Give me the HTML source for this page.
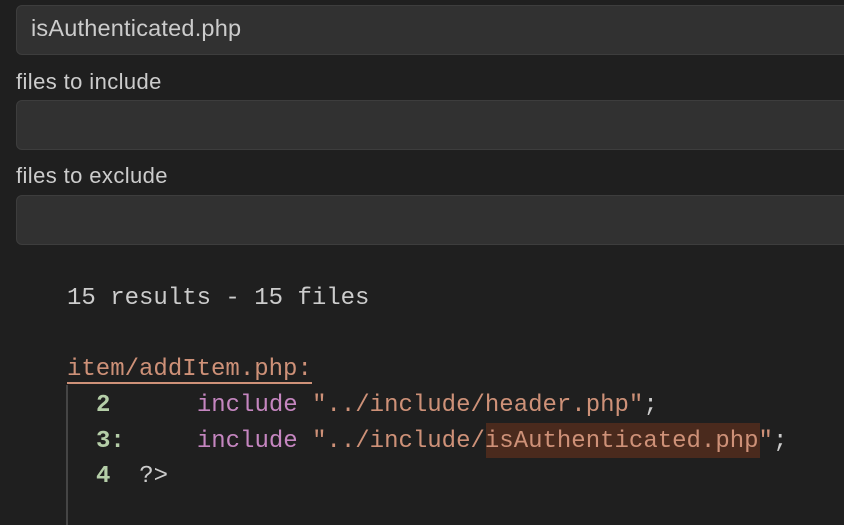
<!DOCTYPE html>
<html><head><style>
body{margin:0;width:844px;height:524px;background:#1f1f1f;overflow:hidden;position:relative;font-family:"Liberation Sans",sans-serif;}
.box{position:absolute;left:16px;width:850px;height:49px;background:#313131;border:1px solid #3d3d3d;border-radius:6px;box-sizing:border-box;}
.lbl{position:absolute;left:16px;color:#cccccc;font-size:22px;letter-spacing:0.4px;}
.m{position:absolute;font-family:"Liberation Mono",monospace;font-size:24px;white-space:pre;line-height:30px;color:#cccccc;}
.n{color:#b5cea8;font-weight:bold}
.k{color:#c586c0}
.s{color:#ce9178}
.h{background:#4a2a1d}
</style></head><body>
<div class="box" style="top:5px;height:50px"></div>
<div style="position:absolute;left:31px;top:15px;color:#cccccc;font-size:23.5px;letter-spacing:0.2px">isAuthenticated.php</div>
<div class="lbl" style="top:69px">files to include</div>
<div class="box" style="top:100px;height:50px"></div>
<div class="lbl" style="top:163px">files to exclude</div>
<div class="box" style="top:195px;height:50px"></div>
<div class="m" style="left:67px;top:284px">15 results - 15 files</div>
<div class="m s" style="left:67px;top:355px">item/addItem.php:</div>
<div style="position:absolute;left:67px;top:382px;width:245px;height:2px;background:#ce9178"></div>
<div style="position:absolute;left:66px;top:385px;width:2px;height:140px;background:#454545"></div>
<div class="m" style="left:96px;top:391px"><span class="n">2</span>      <span class="k">include</span> <span class="s">"../include/header.php"</span>;</div>
<div class="h" style="position:absolute;left:486px;top:423px;width:274px;height:35px"></div>
<div class="m" style="left:96px;top:427px"><span class="n">3:</span>     <span class="k">include</span> <span class="s">"../include/isAuthenticated.php"</span>;</div>
<div class="m" style="left:96px;top:462px"><span class="n">4</span>  ?&gt;</div>
</body></html>
